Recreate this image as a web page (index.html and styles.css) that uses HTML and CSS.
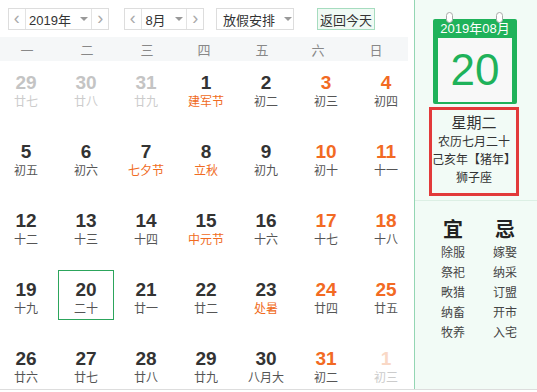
FILE: index.html
```html
<!DOCTYPE html>
<html lang="zh-CN">
<head>
    <meta charset="UTF-8">
    <title>万年历</title>
    <link rel="stylesheet" href="styles.css">
</head>
<body>
    <div class="calendar">
        <!-- Month view -->
        <div class="main">
            <div class="toolbar">
                <div class="picker year-picker">
                    <span class="arrow">&lsaquo;</span>
                    <span class="value">2019年 <i class="caret"></i></span>
                    <span class="arrow">&rsaquo;</span>
                </div>
                <div class="picker month-picker">
                    <span class="arrow">&lsaquo;</span>
                    <span class="value">8月 <i class="caret"></i></span>
                    <span class="arrow">&rsaquo;</span>
                </div>
                <div class="picker holiday-picker">
                    <span class="value">放假安排 <i class="caret"></i></span>
                </div>
                <button class="today-btn">返回今天</button>
            </div>

            <div class="weekdays">
                <span>一</span><span>二</span><span>三</span><span>四</span><span>五</span><span>六</span><span>日</span>
            </div>

            <div class="days">
                <div class="day other"><b>29</b><span>廿七</span></div>
                <div class="day other"><b>30</b><span>廿八</span></div>
                <div class="day other"><b>31</b><span>廿九</span></div>
                <div class="day"><b>1</b><span class="fest">建军节</span></div>
                <div class="day"><b>2</b><span>初二</span></div>
                <div class="day weekend"><b>3</b><span>初三</span></div>
                <div class="day weekend"><b>4</b><span>初四</span></div>

                <div class="day"><b>5</b><span>初五</span></div>
                <div class="day"><b>6</b><span>初六</span></div>
                <div class="day"><b>7</b><span class="fest">七夕节</span></div>
                <div class="day"><b>8</b><span class="fest">立秋</span></div>
                <div class="day"><b>9</b><span>初九</span></div>
                <div class="day weekend"><b>10</b><span>初十</span></div>
                <div class="day weekend"><b>11</b><span>十一</span></div>

                <div class="day"><b>12</b><span>十二</span></div>
                <div class="day"><b>13</b><span>十三</span></div>
                <div class="day"><b>14</b><span>十四</span></div>
                <div class="day"><b>15</b><span class="fest">中元节</span></div>
                <div class="day"><b>16</b><span>十六</span></div>
                <div class="day weekend"><b>17</b><span>十七</span></div>
                <div class="day weekend"><b>18</b><span>十八</span></div>

                <div class="day"><b>19</b><span>十九</span></div>
                <div class="day today"><b>20</b><span>二十</span></div>
                <div class="day"><b>21</b><span>廿一</span></div>
                <div class="day"><b>22</b><span>廿二</span></div>
                <div class="day"><b>23</b><span class="fest">处暑</span></div>
                <div class="day weekend"><b>24</b><span>廿四</span></div>
                <div class="day weekend"><b>25</b><span>廿五</span></div>

                <div class="day"><b>26</b><span>廿六</span></div>
                <div class="day"><b>27</b><span>廿七</span></div>
                <div class="day"><b>28</b><span>廿八</span></div>
                <div class="day"><b>29</b><span>廿九</span></div>
                <div class="day"><b>30</b><span>八月大</span></div>
                <div class="day weekend"><b>31</b><span>初二</span></div>
                <div class="day weekend other"><b>1</b><span>初三</span></div>
            </div>
        </div>

        <!-- Selected day detail -->
        <div class="side">
            <div class="page-icon">
                <i class="ring ring-left"></i>
                <i class="ring ring-right"></i>
                <div class="page-head">2019年08月</div>
                <div class="page-body">20</div>
            </div>

            <div class="day-info">
                <div class="weekday">星期二</div>
                <div>农历七月二十</div>
                <div>己亥年【猪年】</div>
                <div>狮子座</div>
            </div>

            <div class="almanac">
                <div class="almanac-col">
                    <h4>宜</h4>
                    <span>除服</span><span>祭祀</span><span>畋猎</span><span>纳畜</span><span>牧养</span>
                </div>
                <div class="almanac-col">
                    <h4>忌</h4>
                    <span>嫁娶</span><span>纳采</span><span>订盟</span><span>开市</span><span>入宅</span>
                </div>
            </div>
        </div>
    </div>
</body>
</html>
```

FILE: styles.css
```css
* {
    margin: 0;
    padding: 0;
    box-sizing: border-box;
}

body {
    font-family: "Liberation Sans", "Noto Sans CJK SC", sans-serif;
    color: #333;
    background: #fff;
}

.calendar {
    display: flex;
    width: 537px;
    height: 390px;
    border-bottom: 1px solid #ddd;
}

.main {
    width: 414px;
    overflow: hidden;
}

/* toolbar */
.toolbar {
    display: flex;
    align-items: center;
    padding: 8px 0 0 8px;
    height: 30px;
}

.picker {
    display: flex;
    height: 22px;
    border: 1px solid #ddd;
    font-size: 13px;
    color: #333;
}

.picker .arrow {
    width: 17px;
    display: flex;
    align-items: center;
    justify-content: center;
    color: #aaa;
    font-size: 18px;
    line-height: 1;
    padding-bottom: 2px;
}

.picker .arrow:first-child { border-right: 1px solid #e3e3e3; }
.picker .arrow:last-child { border-left: 1px solid #e3e3e3; }

.picker .value {
    display: flex;
    align-items: center;
    justify-content: center;
    gap: 9px;
}

.caret {
    width: 0;
    height: 0;
    border-left: 4px solid transparent;
    border-right: 4px solid transparent;
    border-top: 4px solid #999;
}

.year-picker { width: 101px; }
.year-picker .value { width: 67px; }

.month-picker { width: 80px; margin-left: 15px; }
.month-picker .value { width: 46px; }

.holiday-picker { width: 78px; margin-left: 12px; }
.holiday-picker .value { width: 100%; padding-left: 6px; justify-content: flex-start; gap: 9px; }

.today-btn {
    margin-left: 23px;
    width: 58px;
    height: 22px;
    border: 1px solid #a6dcbf;
    background: #f0faf4;
    font-family: "Liberation Sans", "Noto Sans CJK SC", sans-serif;
    font-size: 13px;
    color: #333;
}

/* weekday header */
.weekdays {
    display: grid;
    grid-template-columns: 54px 66px 54px 60px 56px 56px 60px;
    margin-top: 7px;
    width: 408px;
    height: 24px;
    background: #f5f7f8;
    align-items: center;
    text-align: center;
    font-size: 13px;
    color: #888;
}

/* day grid */
.days {
    display: grid;
    grid-template-columns: repeat(7, 56px);
    grid-auto-rows: 50px;
    column-gap: 4px;
    row-gap: 19px;
    margin: 2px 0 0 -2px;
}

.day {
    display: flex;
    flex-direction: column;
    align-items: center;
    padding-top: 8px;
    border: 1px solid transparent;
}

.day b {
    font-size: 19px;
    line-height: 22px;
    color: #333;
}

.day span {
    font-size: 12px;
    line-height: 16px;
    color: #555;
}

.day .fest { color: #f06b22; }
.weekend b { color: #f26a23; }

.other b { color: #c4c4c4; }
.other span { color: #cccccc; }
.weekend.other b { color: #f9d8c6; }

.today { border-color: #2ca55c; }

/* right panel */
.side {
    width: 123px;
    border-left: 1px solid #93d6b3;
    background: #f2fbf6;
    display: flex;
    flex-direction: column;
    align-items: center;
}

.page-icon {
    position: relative;
    width: 84px;
    margin-top: 19px;
    margin-left: -2px;
    background: #1fb25a;
    border-radius: 2px;
    padding: 0 5px 2px;
}

.ring {
    position: absolute;
    top: -7px;
    width: 7px;
    height: 11px;
    border: 1px solid #aaa;
    border-radius: 4px;
    background: #fff;
}

.ring-left { left: 13px; }
.ring-right { left: 63px; }

.page-head {
    height: 19px;
    line-height: 20px;
    text-align: center;
    color: #fff;
    font-size: 13px;
}

.page-body {
    height: 64px;
    background: #f8f8f8;
    text-align: center;
    font-size: 44px;
    line-height: 64px;
    color: #1fb25a;
}

.day-info {
    width: 90px;
    height: 89px;
    margin-top: 3px;
    margin-left: -4px;
    border: 3px solid #e23a3a;
    text-align: center;
    font-size: 12px;
    line-height: 18px;
    color: #333;
    padding-top: 3px;
    white-space: nowrap;
}

.day-info .weekday {
    font-size: 15px;
    line-height: 20px;
}

.almanac {
    display: flex;
    gap: 12px;
    width: 100%;
    margin-top: 4px;
    padding: 17px 0 0 18px;
    border-top: 1px solid #dcefe4;
}

.almanac-col {
    width: 40px;
    display: flex;
    flex-direction: column;
    align-items: center;
}

.almanac h4 {
    font-size: 20px;
    line-height: 24px;
    font-weight: bold;
    color: #222;
    margin-bottom: 1px;
}

.almanac span {
    font-size: 12px;
    line-height: 20px;
    color: #444;
}
```
